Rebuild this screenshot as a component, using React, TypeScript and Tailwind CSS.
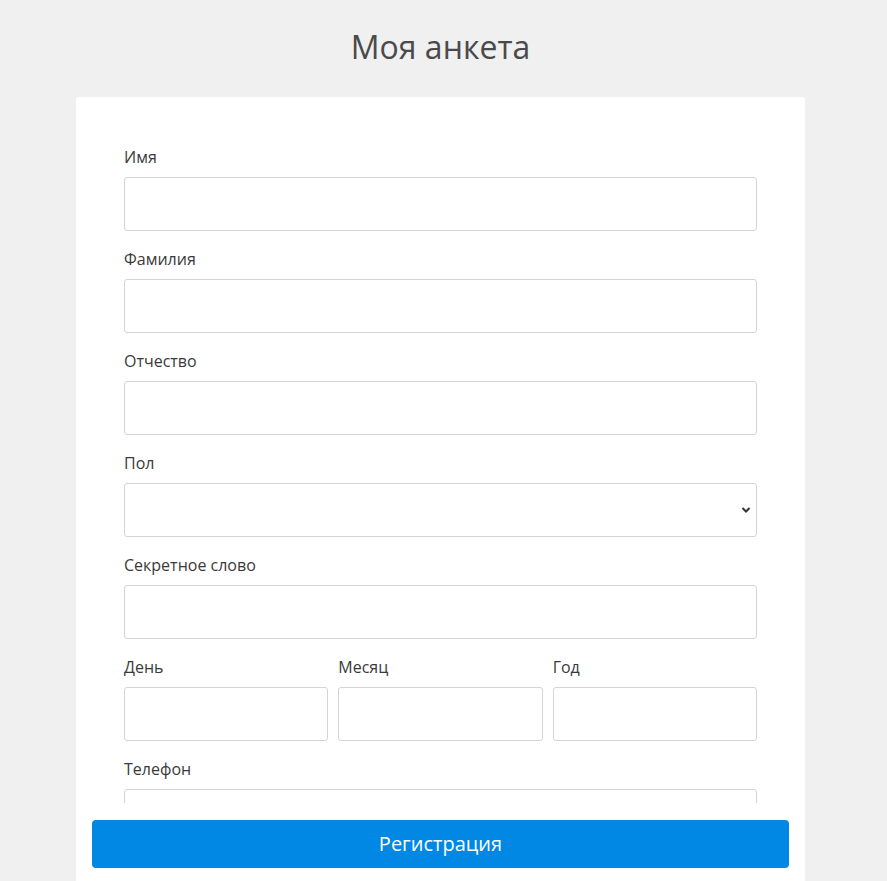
import { ReactNode } from "react";

const font = { fontFamily: '"Open Sans", "DejaVu Sans", sans-serif' };

function Field({ label, children }: { label: string; children: ReactNode }) {
  return (
    <div className="mb-[18px]">
      <label className="block h-5 mb-[10px] text-[16px] leading-5 text-[#3a3a3a]">{label}</label>
      {children}
    </div>
  );
}

function TextInput() {
  return (
    <input
      type="text"
      className="block w-full h-[54px] border border-[#d4d4d4] rounded-[3px] bg-white px-3 outline-none"
    />
  );
}

export default function App() {
  return (
    <div className="min-h-screen bg-[#f0f0f0]" style={font}>
      <div className="ml-[76px] w-[729px]">
        <h1 className="pt-[27px] h-[97px] text-center text-[32px] leading-[40px] text-[#4a4a4a]">
          Моя анкета
        </h1>

        <div className="bg-white rounded-[3px] pb-6">
          <div className="h-[706px] overflow-hidden px-12 pt-[50px]">
            <Field label="Имя">
              <TextInput />
            </Field>
            <Field label="Фамилия">
              <TextInput />
            </Field>
            <Field label="Отчество">
              <TextInput />
            </Field>
            <Field label="Пол">
              <div className="relative">
                <select className="block w-full h-[54px] appearance-none border border-[#d4d4d4] rounded-[3px] bg-white px-3 outline-none">
                  <option></option>
                  <option>Мужской</option>
                  <option>Женский</option>
                </select>
                <svg
                  className="absolute right-[6px] top-[22px] w-[10px] h-[10px] text-[#333]"
                  viewBox="0 0 10 10"
                  fill="none"
                  stroke="currentColor"
                  strokeWidth="2"
                >
                  <path d="M1.5 3 L5 6.5 L8.5 3" />
                </svg>
              </div>
            </Field>
            <Field label="Секретное слово">
              <TextInput />
            </Field>
            <div className="grid grid-cols-3 gap-[10px]">
              <Field label="День">
                <TextInput />
              </Field>
              <Field label="Месяц">
                <TextInput />
              </Field>
              <Field label="Год">
                <TextInput />
              </Field>
            </div>
            <Field label="Телефон">
              <TextInput />
            </Field>
          </div>

          <div className="px-4 pt-[17px]">
            <button className="w-full h-12 rounded-[4px] bg-[#0088e4] text-white text-[20px]">
              Регистрация
            </button>
          </div>
        </div>
      </div>
    </div>
  );
}
